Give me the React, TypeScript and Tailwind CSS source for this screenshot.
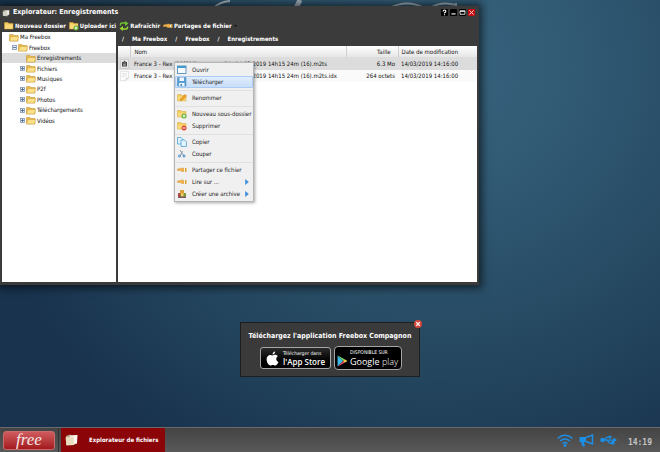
import type { ReactNode } from "react";

type IconProps = { className?: string };

function Folder({ className = "h-[9px] w-[10px]" }: IconProps) {
  return (
    <svg viewBox="0 0 20 18" className={className} aria-hidden="true">
      <path d="M1 3h7l2 2h8v11H1z" fill="#e6b84c" stroke="#c08f2d" />
      <path d="M4 7h15l-2 9H1z" fill="#fbe08a" stroke="#cfa03a" />
    </svg>
  );
}

function FolderSolid({ badge }: { badge?: "plus" | "minus" | "pencil" }) {
  return (
    <svg viewBox="0 0 20 20" className="h-[10px] w-[10px]" aria-hidden="true">
      <path d="M1 3h7l2 2h8v11H1z" fill="#f3c95a" stroke="#d9a93c" />
      <path d="M2 7h15v8H2z" fill="#f9d97a" />
      {badge === "plus" && (
        <>
          <circle cx="14" cy="14" r="5" fill="#5fae2e" />
          <path d="M14 11v6M11 14h6" stroke="#fff" strokeWidth="2" />
        </>
      )}
      {badge === "minus" && (
        <>
          <circle cx="14" cy="14" r="5" fill="#e2452f" />
          <path d="M11 14h6" stroke="#fff" strokeWidth="2" />
        </>
      )}
      {badge === "pencil" && <path d="M6 15l2-4 8-8 3 3-8 8z" fill="#f5a623" stroke="#b8761a" />}
    </svg>
  );
}

function Files({ className = "h-[9px] w-[9px]" }: IconProps) {
  return (
    <svg viewBox="0 0 20 20" className={className} aria-hidden="true">
      <path d="M2 5l5-3 2 2 9-1v11l-4 4-11-1z" fill="#9b988f" />
      <path d="M8 4l10-1v11l-9 2z" fill="#eceae2" />
      <path d="M2 7l11-1-1 12-10-1z" fill="#d3d0c6" />
    </svg>
  );
}

function TaskFolder() {
  return (
    <svg viewBox="0 0 28 24" className="h-3 w-[14px] shrink-0" aria-hidden="true">
      <path d="M2 4l8-3 3 2 11-1v16l-6 4H2z" fill="#b8a98a" />
      <path d="M10 3l15-1-1 17-13 2z" fill="#faf8f0" />
      <path d="M1 7l16-2 1 17-15 1z" fill="#e9dcc0" />
    </svg>
  );
}

function Refresh() {
  return (
    <svg viewBox="0 0 20 20" className="h-[10px] w-[10px]" aria-hidden="true">
      <path d="M3 9V7q0-3 3-3h8" fill="none" stroke="#6fc22c" strokeWidth="3" />
      <path d="M12 0l7 5-7 5z" fill="#6fc22c" />
      <path d="M17 11v2q0 3-3 3H6" fill="none" stroke="#9ad72f" strokeWidth="3" />
      <path d="M8 20l-7-5 7-5z" fill="#9ad72f" />
    </svg>
  );
}

function Hand() {
  return (
    <svg viewBox="0 0 20 20" className="h-[10px] w-[10px]" aria-hidden="true">
      <path d="M1 8l10-2 3 1v6H9l-2-2H1z" fill="#eeb54e" stroke="#d99a3c" />
      <path d="M14 7h2v6h-2z" fill="#f8efdc" />
      <path d="M16 6h3v8h-3z" fill="#d9a23f" />
    </svg>
  );
}

function WindowIcon() {
  return (
    <svg viewBox="0 0 20 20" className="h-[10px] w-[10px]" aria-hidden="true">
      <rect x="1" y="2" width="17" height="15" fill="#f5fbff" stroke="#3a86b8" strokeWidth="1.6" />
      <path d="M1 2h17v4H1z" fill="#4499cd" />
    </svg>
  );
}

function Floppy() {
  return (
    <svg viewBox="0 0 20 20" className="h-[10px] w-[10px]" aria-hidden="true">
      <path d="M1 1h17v17H1z" fill="#5b9fd0" stroke="#3f80b3" />
      <path d="M5 1h9v7H5zM4 12h11v6H4z" fill="#eef7fd" />
      <path d="M7 14h3v4H7z" fill="#3f80b3" />
    </svg>
  );
}

function Copy() {
  return (
    <svg viewBox="0 0 20 20" className="h-[10px] w-[10px]" aria-hidden="true">
      <path d="M1 1h7l4 4v9H1z" fill="#e3f3fc" stroke="#4a9ed2" strokeWidth="1.5" />
      <path d="M8 6h7l4 4v9H8z" fill="#e3f3fc" stroke="#4a9ed2" strokeWidth="1.5" />
    </svg>
  );
}

function Scissors() {
  return (
    <svg viewBox="0 0 20 20" className="h-[10px] w-[10px]" aria-hidden="true">
      <path d="M6 2l7 11M11 4L7 13" stroke="#8b9aa8" strokeWidth="2" fill="none" />
      <circle cx="5" cy="14" r="2" fill="none" stroke="#4187c4" strokeWidth="2" />
      <circle cx="14" cy="14" r="2" fill="none" stroke="#4187c4" strokeWidth="2" />
    </svg>
  );
}

function Archive() {
  return (
    <svg viewBox="0 0 20 20" className="h-[10px] w-[10px]" aria-hidden="true">
      <path d="M2 8h16v9H2z" fill="#7a9a3a" />
      <path d="M2 8h5v9H2z" fill="#b24a3a" />
      <path d="M6 2h8v8H6z" fill="#d9a13c" />
      <path d="M8 9h5v6H8z" fill="#f1d264" />
      <path d="M2 15h16v3H2z" fill="#7c5a66" />
    </svg>
  );
}

function VideoFile() {
  return (
    <svg viewBox="0 0 18 20" className="mx-auto h-[10px] w-[9px]" aria-hidden="true">
      <path d="M1 1h16v18H1z" fill="#e8e8e8" stroke="#b9b9b9" />
      <path d="M4 6h10v9H4z" fill="#444" />
      <path d="M6 8h6M6 11h6M6 13h6" stroke="#ccc" />
      <path d="M6 6l3-3 3 3" fill="#555" />
    </svg>
  );
}

function TextFile() {
  return (
    <svg viewBox="0 0 18 20" className="mx-auto h-[10px] w-[9px]" aria-hidden="true">
      <path d="M1 1h16v13l-5 5H1z" fill="#fbfbfb" stroke="#cfcfcf" />
      <path d="M4 5h10M4 8h10M4 11h7" stroke="#d0d0d0" />
      <path d="M12 19v-5h5" fill="#e2e2e2" stroke="#c4c4c4" />
    </svg>
  );
}

const tools: { label: string; icon: ReactNode; menu?: boolean }[] = [
  { label: "Nouveau dossier", icon: <FolderSolid /> },
  { label: "Uploader ici", icon: <FolderSolid badge="plus" /> },
  { label: "Rafraîchir", icon: <Refresh /> },
  { label: "Partages de fichier", icon: <Hand />, menu: true },
];

const folders = ["Enregistrements", "Fichiers", "Musiques", "P2f", "Photos", "Téléchargements", "Vidéos"];

const menuGroups: { label: string; icon: ReactNode; sub?: boolean; active?: boolean }[][] = [
  [
    { label: "Ouvrir", icon: <WindowIcon /> },
    { label: "Télécharger", icon: <Floppy />, active: true },
  ],
  [{ label: "Renommer", icon: <FolderSolid badge="pencil" /> }],
  [
    { label: "Nouveau sous-dossier", icon: <FolderSolid badge="plus" /> },
    { label: "Supprimer", icon: <FolderSolid badge="minus" /> },
  ],
  [
    { label: "Copier", icon: <Copy /> },
    { label: "Couper", icon: <Scissors /> },
  ],
  [
    { label: "Partager ce fichier", icon: <Hand /> },
    { label: "Lire sur ...", icon: <Hand />, sub: true },
    { label: "Créer une archive", icon: <Archive />, sub: true },
  ],
];

function Expander({ open }: { open?: boolean }) {
  return (
    <svg viewBox="0 0 10 10" className="h-[5px] w-[5px] shrink-0" aria-hidden="true">
      <rect x="1" y="1" width="8" height="8" fill="#e4edf7" stroke="#7f93ad" strokeWidth="1.6" />
      <path d={open ? "M2 5h6" : "M2 5h6M5 2v6"} stroke="#33507a" strokeWidth="1.4" />
    </svg>
  );
}

function ContextMenu() {
  return (
    <div
      role="menu"
      className="absolute top-4 left-14 w-[80px] border border-[#b5b5b5] bg-[#f0f0f0] py-px shadow-[1px_1px_3px_rgba(0,0,0,0.35)]"
    >
      {menuGroups.map((group, i) => (
        <div key={i} role="group" className={i > 0 ? "mt-[2px] border-t border-[#e0e0e0] pt-px" : ""}>
          {group.map((item) => (
            <button
              key={item.label}
              role="menuitem"
              className={
                "flex h-3 w-full items-center rounded-[1px] pl-[2px] text-left whitespace-nowrap text-[#222] " +
                (item.active ? "bg-linear-to-b from-[#e3eefc] to-[#c5dcf9] outline outline-[#a9cbf5] -outline-offset-1" : "")
              }
            >
              <span className="w-[15px] shrink-0">{item.icon}</span>
              <span className="flex-1">{item.label}</span>
              {item.sub && (
                <svg viewBox="0 0 6 10" className="mr-1 h-[6px] w-1 shrink-0" aria-hidden="true">
                  <path d="M0 0l6 5-6 5z" fill="#3f8fd9" />
                </svg>
              )}
            </button>
          ))}
        </div>
      ))}
    </div>
  );
}

function Explorer() {
  const control = "flex h-[7px] w-[7px] items-center justify-center rounded-[1px]";
  return (
    <section className="absolute top-[6px] left-0 flex h-[279px] w-[479px] flex-col bg-[#3b3b3b] px-[2px] pb-[3px] shadow-[0_0_8px_3px_rgba(0,0,0,0.6)]">
      <header className="flex h-[13px] items-center text-[7px] leading-[13px] font-bold text-white">
        <Files className="mr-[3px] h-2 w-2" />
        <h1 className="flex-1">Explorateur: Enregistrements</h1>
        <div className="flex gap-[2px] pr-[2px]">
          <button aria-label="Aide" className={control + " bg-black"}>
            <svg viewBox="0 0 10 10" className="h-[7px] w-[7px]">
              <path d="M3 3.5q0-2 2-2t2 2q0 1-2 2v1M5 7.5v1.5" fill="none" stroke="#fff" strokeWidth="1.6" />
            </svg>
          </button>
          <button aria-label="Réduire" className={control + " bg-black"}>
            <svg viewBox="0 0 10 10" className="h-[7px] w-[7px]">
              <path d="M2 7h6" stroke="#fff" strokeWidth="1.6" />
            </svg>
          </button>
          <button aria-label="Agrandir" className={control + " bg-black"}>
            <svg viewBox="0 0 10 10" className="h-[7px] w-[7px]">
              <path d="M1.5 2.5h7v5h-7zM1.5 3.5h7" fill="none" stroke="#fff" strokeWidth="1.2" />
            </svg>
          </button>
          <button aria-label="Fermer" className={control + " bg-[#c40d12]"}>
            <svg viewBox="0 0 10 10" className="h-[7px] w-[7px]">
              <path d="M2 2l6 6M8 2l-6 6" stroke="#fbd5d5" strokeWidth="1.4" />
            </svg>
          </button>
        </div>
      </header>

      <div role="toolbar" className="flex h-[13px] items-center gap-[3px] pl-[2px] font-bold text-white">
        {tools.map((t) => (
          <button key={t.label} className="flex items-center gap-px whitespace-nowrap">
            {t.icon}
            <span>{t.label}</span>
            {t.menu && (
              <svg viewBox="0 0 6 4" className="ml-px h-[2px] w-[3px]" aria-hidden="true">
                <path d="M0 0h6L3 4z" fill="#111" />
              </svg>
            )}
          </button>
        ))}
      </div>

      <div className="flex min-h-0 flex-1 gap-[2px]">
        <nav aria-label="Dossiers" className="w-[114px] bg-white">
          <ul className="grid h-[94px] auto-rows-fr text-[#111]">
            <li className="flex items-center gap-px pl-[7px]">
              <Folder />
              <button>Ma Freebox</button>
            </li>
            <li className="flex items-center gap-px pl-[10px]">
              <Expander open />
              <Folder />
              <button>Freebox</button>
            </li>
            {folders.map((name, i) => (
              <li key={name} className={"flex items-center gap-px " + (i === 0 ? "bg-[#dcdcdc] pl-6" : "pl-[18px]")}>
                {i > 0 && <Expander />}
                <Folder />
                <button>{name}</button>
              </li>
            ))}
          </ul>
        </nav>

        <div className="flex min-w-0 flex-1 flex-col">
          <nav aria-label="Chemin" className="flex h-[14px] items-center gap-2 pl-1 font-bold text-white">
            <span>/</span>
            <a href="#ma-freebox">Ma Freebox</a>
            <span>/</span>
            <a href="#freebox">Freebox</a>
            <span>/</span>
            <a href="#enregistrements">Enregistrements</a>
          </nav>
          <div className="relative min-h-0 flex-1">
            <div className="h-full bg-white">
              <table className="w-full table-fixed border-collapse text-left whitespace-nowrap text-[#111]">
                <colgroup>
                  <col className="w-3" />
                  <col />
                  <col className="w-[52px]" />
                  <col className="w-[79px]" />
                </colgroup>
                <thead>
                  <tr className="h-[11px] bg-linear-to-b from-white to-[#e6e6e6]">
                    <th aria-label="Type" className="border-r border-[#d0d0d0] p-0" />
                    <th className="border-r border-[#d0d0d0] py-0 pr-0 pl-1 font-normal">Nom</th>
                    <th className="border-r border-[#d0d0d0] py-0 pr-[7px] pl-0 text-right font-normal">Taille</th>
                    <th className="py-0 pr-0 pl-[3px] font-normal">Date de modification</th>
                  </tr>
                </thead>
                <tbody>
                  <tr className="h-[13px] bg-[#dcdcdc]">
                    <td className="p-0">
                      <VideoFile />
                    </td>
                    <td className="py-0 pr-0 pl-1">France 3 - Rex (20??15) - mercredi le 14 03 2019 14h15 24m (16).m2ts</td>
                    <td className="py-0 pr-[3px] pl-0 text-right">6.3 Mo</td>
                    <td className="py-0 pr-0 pl-[3px]">14/03/2019 14:16:00</td>
                  </tr>
                  <tr className="h-3 bg-[#fafafa]">
                    <td className="p-0">
                      <TextFile />
                    </td>
                    <td className="py-0 pr-0 pl-1">France 3 - Rex (20??15) - mercredi le 14 03 2019 14h15 24m (16).m2ts.idx</td>
                    <td className="py-0 pr-[3px] pl-0 text-right">264 octets</td>
                    <td className="py-0 pr-0 pl-[3px]">14/03/2019 14:16:00</td>
                  </tr>
                </tbody>
              </table>
            </div>
            <ContextMenu />
          </div>
        </div>
      </div>
    </section>
  );
}

function CompanionPopup() {
  return (
    <aside className="absolute top-[322px] left-1/2 w-[180px] -translate-x-1/2 border border-[#1e1e1e] bg-[#3a3a3a] pt-[6px] pb-[6px]">
      <h2 className="text-center text-[7px] leading-[14px] font-bold whitespace-nowrap text-white">
        Téléchargez l'application Freebox Compagnon
      </h2>
      <div className="mt-[3px] flex items-center justify-center gap-[3px] pl-[2px]">
        <a
          href="#app-store"
          className="flex h-[22px] w-[71px] items-center gap-1 rounded-[3px] border border-[#a6a6a6] bg-linear-to-b from-[#2b2b2b] to-black pl-[5px] text-white"
        >
          <svg viewBox="0 0 24 28" className="h-[15px] w-[13px] shrink-0" aria-hidden="true">
            <path
              d="M17 1c0 3-2 5.500-5 5.500 0-3 2.300-5.200 5-5.500zM12 8.500c1.500 0 3-1.300 5-1.300 2 0 3.800 1 5 2.700-4.500 2.700-3.700 8.800 1 10.600-1 2.800-3.300 6.500-5.800 6.500-1.700 0-2.700-1-4.500-1s-2.900 1-4.500 1C4.500 27 1 21 1 15.500 1 10.200 4.500 7.300 7.700 7.300c1.800 0 3 1.200 4.300 1.200z"
              fill="#fff"
            />
          </svg>
          <span className="flex flex-col whitespace-nowrap">
            <span className="text-[5px] leading-[8px]">Télécharger dans</span>
            <span className="font-['Open_Sans',sans-serif] text-[8px] leading-[10px] font-semibold">l'App Store</span>
          </span>
        </a>
        <a
          href="#google-play"
          className="flex h-[24px] w-[68px] items-center gap-[2px] rounded-[4px] border border-[#a6a6a6] bg-black pl-[2px] text-white"
        >
          <svg viewBox="0 0 20 22" className="mt-[5px] h-3 w-[11px] shrink-0" aria-hidden="true">
            <path d="M1 1l10 10L1 21z" fill="#3bb9e8" />
            <path d="M1 1l13 7-3 3z" fill="#6fcf6b" />
            <path d="M1 21l13-7-3-3z" fill="#e8455a" />
            <path d="M14 8l5 3-5 3-3-3z" fill="#f6c84a" />
          </svg>
          <span className="flex flex-col whitespace-nowrap">
            <span className="text-[5px] leading-[8px]">DISPONIBLE SUR</span>
            <span className="font-['Open_Sans',sans-serif] text-[9px] leading-[12px]">
              Google <span className="font-light">play</span>
            </span>
          </span>
        </a>
      </div>
      <button
        aria-label="Fermer"
        className="absolute -top-[3px] -right-[3px] flex h-2 w-2 items-center justify-center rounded-full bg-[#d4483c]"
      >
        <svg viewBox="0 0 10 10" className="h-[6px] w-[6px]">
          <path d="M2 2l6 6M8 2l-6 6" stroke="#fff" strokeWidth="2" />
        </svg>
      </button>
    </aside>
  );
}

function Taskbar() {
  return (
    <footer className="flex h-[25px] items-stretch border-t border-[#6a6a6a] bg-linear-to-b from-[#444] to-[#595959]">
      <div className="flex items-center border-r border-[#333] pr-[3px] pl-[3px]">
        <button className="h-[19px] w-[52px] rounded-[3px] border border-[#c96a6c] bg-linear-to-b from-[#cf5a5e] to-[#a3161c] font-['Liberation_Serif',serif] text-[17px] leading-[14px] text-[#f6e4e4] italic">
          free
        </button>
      </div>
      <button className="ml-[2px] flex w-[104px] items-center gap-[10px] bg-[#8a0408] pl-1 font-bold whitespace-nowrap text-white">
        <TaskFolder />
        Explorateur de fichiers
      </button>
      <div className="ml-auto flex items-center gap-[6px] pr-2 text-[#1b8fe6]">
        <svg viewBox="0 0 32 26" className="h-[13px] w-4" fill="none" stroke="currentColor" strokeWidth="3" aria-label="Wi-Fi">
          <path d="M1 9Q16-4 31 9M6 14q10-8 20 0M11 19q5-4 10 0" />
          <circle cx="16" cy="23" r="1.5" fill="currentColor" />
        </svg>
        <svg viewBox="0 0 30 26" className="h-[13px] w-[15px]" aria-label="Annonces">
          <path d="M1 6h13v10H1zM4 16h6l2 9H7z" fill="currentColor" />
          <path d="M14 7l13-5v18l-13-5" fill="none" stroke="currentColor" strokeWidth="3" />
        </svg>
        <svg viewBox="0 0 34 20" className="h-[10px] w-[17px]" aria-label="USB">
          <path d="M4 10h26M9 10l5-6h6M14 10l5 6h6" fill="none" stroke="currentColor" strokeWidth="2.5" />
          <circle cx="5" cy="10" r="4.5" fill="currentColor" />
          <path d="M27 5l7 5-7 5zM23 12h6v7h-6z" fill="currentColor" />
          <circle cx="20" cy="4" r="3" fill="currentColor" />
        </svg>
        <time className="ml-[5px] pt-[6px] font-['DejaVu_Sans_Mono',monospace] text-[8px] leading-[10px] font-bold text-[#c4c4c4]">
          14:19
        </time>
      </div>
    </footer>
  );
}

export default function App() {
  return (
    <div className="flex min-h-screen flex-col bg-[#1b3550] font-['DejaVu_Sans_Condensed','DejaVu_Sans',sans-serif] text-[6px] leading-[10px]">
      <main className="relative flex-1 overflow-hidden bg-[radial-gradient(ellipse_72%_105%_at_66%_15%,#38647f_0%,#2f5771_35%,#254860_65%,#19334e_100%)]">
        <svg viewBox="0 0 260 12" className="absolute top-0 left-[210px] h-3 w-[260px]" fill="none" stroke="#a9b7c2" aria-hidden="true">
          <path d="M4 8Q9 2 20 1" strokeWidth="2" />
          <path d="M86 8L90 0" strokeWidth="5" />
          <path d="M180 8Q197-1 214 8" strokeWidth="2" />
          <path d="M222 7Q232 1 246 5V3" strokeWidth="2" />
        </svg>
        <Explorer />
        <CompanionPopup />
      </main>
      <Taskbar />
    </div>
  );
}
